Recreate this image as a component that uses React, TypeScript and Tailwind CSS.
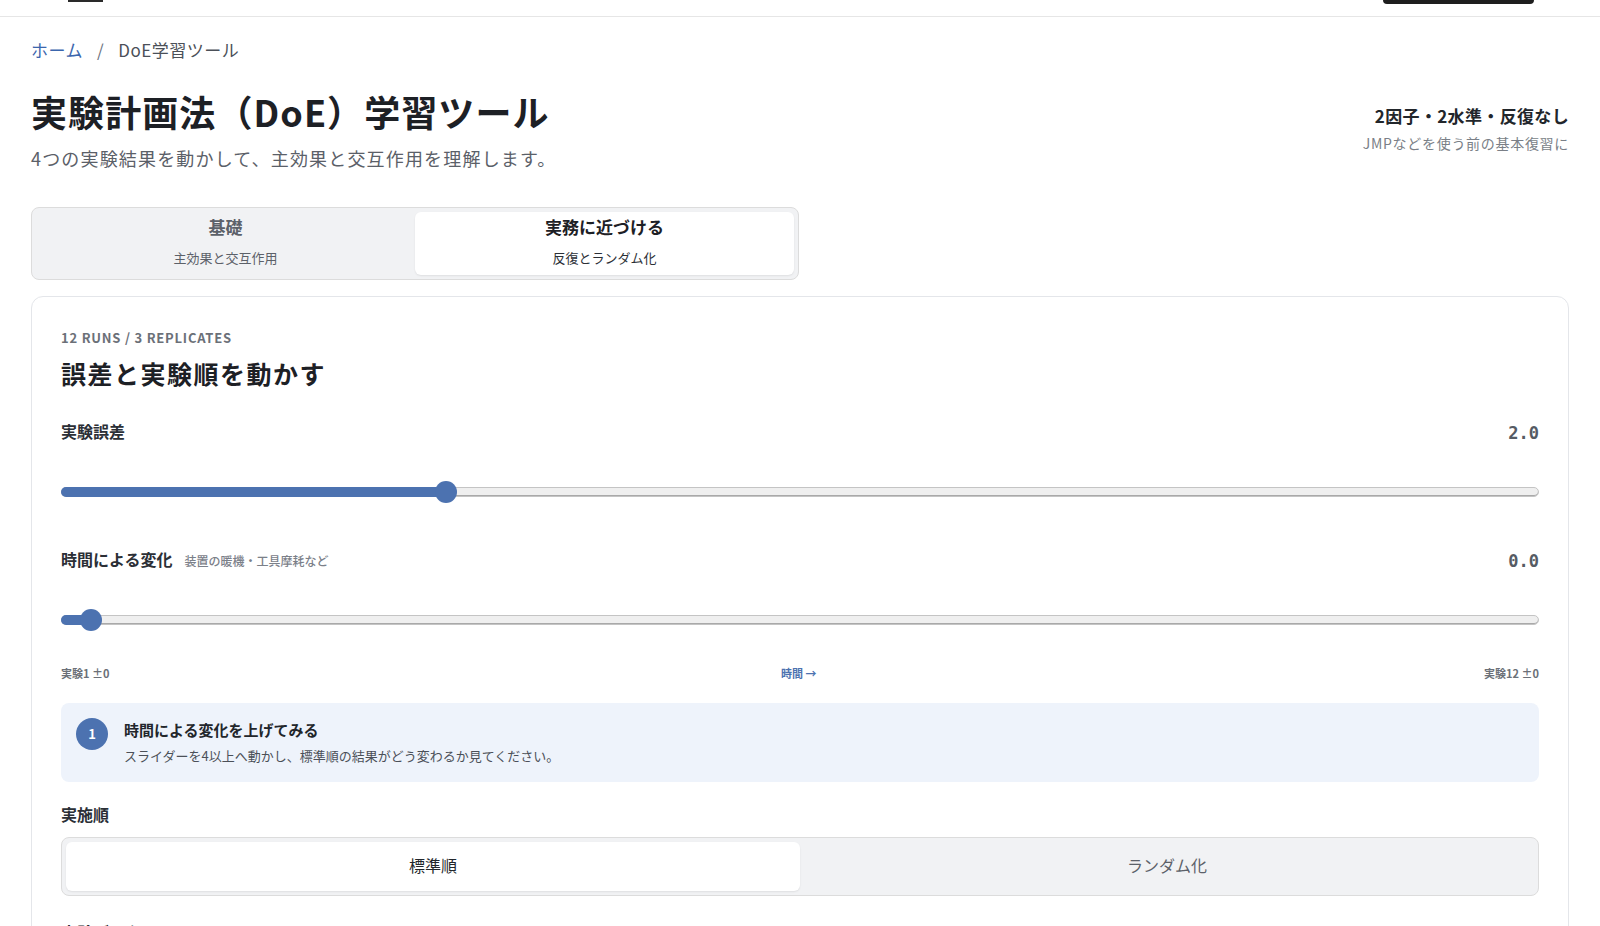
import React from "react";

const SLIDERS = [
  { id: "noise", label: "実験誤差", hint: "", value: 2, pct: 26.07 },
  { id: "drift", label: "時間による変化", hint: "装置の暖機・工具摩耗など", value: 0, pct: 2.03 },
];

function Slider({ label, hint, value, pct }: { label: string; hint: string; value: number; pct: number }) {
  return (
    <div>
      <div className="flex h-[24px] items-start justify-between">
        <div className="flex items-baseline">
          <span className="text-[16px] leading-[24px] font-bold text-[#2b2f36]">{label}</span>
          {hint && <span className="ml-3 text-[12px] font-medium text-[#7b8089]">{hint}</span>}
        </div>
        <span className="relative top-[2px] font-['DejaVu_Sans_Mono',monospace] text-[17px] leading-[24px] font-bold text-[#555b64]">
          {value.toFixed(1)}
        </span>
      </div>
      <div className="relative mt-[38px] flex h-[22px] items-center">
        <div className="h-[10px] w-full rounded-full border border-[#c4c4c4] bg-[#efefef] shadow-[inset_0_-1px_0_#a9a9a9]" />
        <div className="absolute left-0 h-[10px] rounded-full bg-[#4c72b0]" style={{ width: `${pct}%` }} />
        <div
          className="absolute h-[22px] w-[22px] rounded-full bg-[#4c72b0]"
          style={{ left: `calc(${pct}% - 11px)` }}
        />
      </div>
    </div>
  );
}

export default function App() {
  return (
    <div className="h-[926px] overflow-hidden bg-white font-['Noto_Sans_CJK_JP','Noto_Sans',sans-serif] text-[#1f2328]">
      {/* top bar, scrolled mostly out of view */}
      <header className="flex h-[17px] items-start justify-between border-b border-[#e6e6e6] pl-[68px] pr-[66px]">
        <div className="h-[2px] w-[35px] bg-[#2a2a2a]" />
        <div className="h-[4px] w-[151px] rounded-b-[8px] bg-[#1e1e1e]" />
      </header>

      <main className="px-[31px] pt-[21px]">
        <nav className="flex items-center text-[17px] leading-[24px] tracking-[0.03em]">
          <span className="text-[#3b66ad]">ホーム</span>
          <span className="mx-[14px] text-[#6b7280]">/</span>
          <span className="text-[#4b5058]">DoE学習ツール</span>
        </nav>

        <div className="mt-[27px] flex items-center justify-between">
          <div>
            <h1 className="text-[36px] leading-[45px] font-bold tracking-[0.03em] text-[#1d2025]">
              実験計画法（DoE）学習ツール
            </h1>
            <p className="mt-[10px] text-[18px] leading-[28px] tracking-[0.065em] text-[#5b6068]">
              4つの実験結果を動かして、主効果と交互作用を理解します。
            </p>
          </div>
          <div className="pb-[4px] text-right">
            <div className="text-[17px] leading-[24px] font-bold tracking-[0.02em] text-[#22262b]">
              2因子・2水準・反復なし
            </div>
            <div className="mt-[5px] text-[14px] leading-[20px] tracking-[0.05em] text-[#7a7f87]">
              JMPなどを使う前の基本復習に
            </div>
          </div>
        </div>

        <div className="mt-[35px] grid w-[768px] grid-cols-2 rounded-lg border border-[#dcdcdc] bg-[#f1f2f4] p-[4px]">
          <button className="flex flex-col items-center pt-[3px] pb-[8px]">
            <span className="text-[17px] leading-[23px] font-bold text-[#5c6169]">基礎</span>
            <span className="mt-[11px] text-[13px] leading-[18px] text-[#5c6169]">主効果と交互作用</span>
          </button>
          <button className="flex flex-col items-center rounded-md bg-white pt-[3px] pb-[8px] shadow-[0_1px_2px_rgba(0,0,0,0.08)]">
            <span className="text-[17px] leading-[23px] font-bold text-[#1d2025]">実務に近づける</span>
            <span className="mt-[11px] text-[13px] leading-[18px] text-[#2b2f36]">反復とランダム化</span>
          </button>
        </div>

        <section className="mt-[16px] rounded-xl border border-[#e4e6ea] bg-white px-[29px] pt-[31px] pb-[29px]">
          <div className="text-[13px] leading-[20px] font-semibold tracking-[0.06em] text-[#6b7078]">
            12 RUNS / 3 REPLICATES
          </div>
          <h2 className="mt-[8px] text-[25px] leading-[34px] font-bold tracking-[0.06em] text-[#1d2025]">
            誤差と実験順を動かす
          </h2>

          <div className="mt-[29px]">
            <Slider {...SLIDERS[0]} />
          </div>
          <div className="mt-[44px]">
            <Slider {...SLIDERS[1]} />
          </div>

          <div className="mt-[34px] flex items-center justify-between text-[11px] leading-[16px] font-bold text-[#6b7078]">
            <span>実験1 ±0</span>
            <span className="pl-[4px] text-[#4c72b0]">時間 →</span>
            <span>実験12 ±0</span>
          </div>

          <div className="mt-[22px] flex items-start gap-[16px] rounded-lg bg-[#eef3fb] px-[15px] pt-[15px] pb-[16px]">
            <div className="flex h-[32px] w-[32px] shrink-0 items-center justify-center rounded-full bg-[#4c72b0] text-[13px] font-bold text-white">
              1
            </div>
            <div className="pt-[1px]">
              <div className="text-[15px] leading-[22px] font-bold text-[#22262b]">時間による変化を上げてみる</div>
              <div className="mt-[5px] text-[13px] leading-[20px] text-[#4b5058]">
                スライダーを4以上へ動かし、標準順の結果がどう変わるか見てください。
              </div>
            </div>
          </div>

          <div className="mt-[20px] text-[16px] leading-[24px] font-bold text-[#2b2f36]">実施順</div>
          <div className="mt-[11px] grid grid-cols-2 rounded-lg border border-[#dcdcdc] bg-[#f1f2f4] p-[4px]">
            <button className="h-[49px] rounded-md bg-white pb-[3px] text-[16px] text-[#22262b] shadow-[0_1px_2px_rgba(0,0,0,0.08)]">
              標準順
            </button>
            <button className="h-[49px] pb-[3px] text-[16px] text-[#5c6169]">ランダム化</button>
          </div>

          <div className="mt-[24px] text-[16px] leading-[24px] font-bold text-[#2b2f36]">実験データ</div>
        </section>
      </main>
    </div>
  );
}
